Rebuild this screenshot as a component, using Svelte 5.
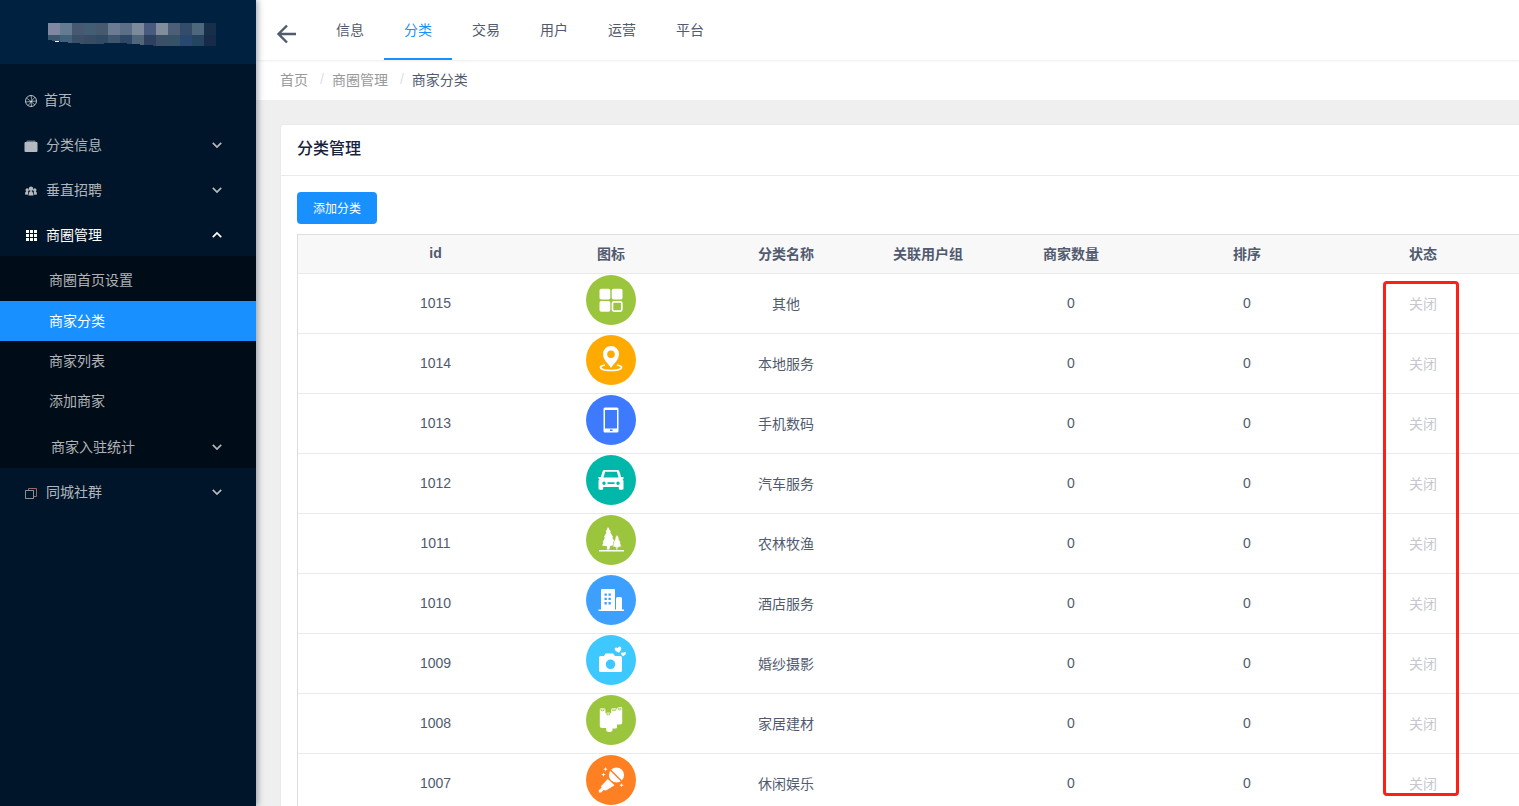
<script>
	let activeTab = $state('分类');
	let shopOpen = $state(true);

	const tabs = ['信息', '分类', '交易', '用户', '运营', '平台'];
	const shopMenu = ['商圈首页设置', '商家分类', '商家列表', '添加商家'];

	const categories = [
		{ id: 1015, icon: 'grid', color: '#9bc53d', name: '其他' },
		{ id: 1014, icon: 'pin', color: '#ffaa00', name: '本地服务' },
		{ id: 1013, icon: 'phone', color: '#3d7aff', name: '手机数码' },
		{ id: 1012, icon: 'car', color: '#00b8a9', name: '汽车服务' },
		{ id: 1011, icon: 'tree', color: '#9bc53d', name: '农林牧渔' },
		{ id: 1010, icon: 'hotel', color: '#3da0ff', name: '酒店服务' },
		{ id: 1009, icon: 'camera', color: '#3dc8ff', name: '婚纱摄影' },
		{ id: 1008, icon: 'home', color: '#9bc53d', name: '家居建材' },
		{ id: 1007, icon: 'mic', color: '#ff8022', name: '休闲娱乐' }
	];

	const mosaicTop = ['#8087a0', '#647c91', '#475970', '#435d74', '#45596f', '#6b7b93', '#5b7086', '#7c8b9b', '#485b7e', '#808d9c', '#4d5e77', '#334c69', '#4f677b', '#163049'];
	const mosaicBottom = ['#3b586f', '#42617a', '#3b4f68', '#394c66', '#314b66', '#40566f', '#2d4967', '#51667a', '#2e405f', '#3b5067', '#355268', '#284870', '#25445f', '#172b49'];
</script>

{#snippet chevron(up)}
	<svg class="chevron" class:up viewBox="0 0 12 12" aria-hidden="true">
		<path d="M1.8 3.8 6 8l4.2-4.2" fill="none" stroke="currentColor" stroke-width="1.7" />
	</svg>
{/snippet}

{#snippet glyph(kind)}
	{#if kind === 'grid'}
		<rect x="13.500" y="13.700" width="10.800" height="10.800" rx="1.800" />
		<rect x="25.700" y="13.700" width="10.800" height="10.800" rx="1.800" />
		<rect x="13.500" y="26" width="10.800" height="10.800" rx="1.800" />
		<rect class="line" x="26.500" y="26.800" width="9.300" height="9.300" rx="1.500" stroke-width="1.700" />
	{:else if kind === 'pin'}
		<path fill-rule="evenodd" d="M25 11a8 8 0 0 0-8 8c0 6 5 9 8 14 3-5 8-8 8-14a8 8 0 0 0-8-8zm0 4.500a3.800 3.800 0 1 1 0 7.600 3.800 3.800 0 0 1 0-7.600z" />
		<path class="line" d="M19 30c-8 1.500-5 5.500 6 5.500s14-4 6-5.500" stroke-width="1.7" />
	{:else if kind === 'phone'}
		<path fill-rule="evenodd" d="M19 12.500h12a1.500 1.500 0 0 1 1.500 1.500v22a1.500 1.500 0 0 1-1.500 1.500H19a1.500 1.500 0 0 1-1.500-1.500V14a1.500 1.500 0 0 1 1.500-1.500zm0 2.500v18.500h12V15zm5 19.500v1.600h2.500v-1.600z" />
	{:else if kind === 'car'}
		<path fill-rule="evenodd" d="M18.500 15h13c1 0 1.600.6 2 1.600l1.600 5.400h2.400v2h-1.200c.7.500 1.200 1.400 1.200 2.400v7.100c0 .8-.5 1.200-1.200 1.200h-2.200c-.8 0-1.300-.5-1.300-1.300V32H17.200v1.400c0 .8-.5 1.300-1.300 1.300h-2.200c-.7 0-1.200-.4-1.200-1.200v-7.100c0-1 .5-1.900 1.200-2.400h-1.200v-2h2.400l1.600-5.400c.4-1 1-1.600 2-1.600zm.7 1.800-1.800 5.700h15.200l-1.800-5.700zM18 26.500a1.700 1.700 0 1 0 0 3.400 1.700 1.700 0 0 0 0-3.400zm14 0a1.700 1.700 0 1 0 0 3.400 1.700 1.700 0 0 0 0-3.400zM21.500 27.300v1.800h7v-1.800z" />
	{:else if kind === 'tree'}
		<path d="m22 12 3 5-.8.2 3 5-1 .2 2.500 4.300-1 .3 1.500 3-5 1-.8 3.500h-2.600l.2-3.200-5-.8 1.600-3-1-.3 2.400-4.800-1-.2 2.500-5-.9-.2z" />
		<path stroke="#9bc53d" stroke-width=".6" d="m31 19.500 2.300 4-.7.200 2.200 3.800-.7.300 1.500 3.700-3.800 1-.3 2.500h-1.400v-2.500l-3.400-1 1.300-3.500-.8-.3 2.200-4-.6-.2z" />
		<path d="M13 35h25v1.500H13z" />
	{:else if kind === 'hotel'}
		<path fill-rule="evenodd" d="M16 14h12a1 1 0 0 1 1 1v19.500h1V23.500a1.500 1.500 0 0 1 1.500-1.500h3a1.500 1.500 0 0 1 1.500 1.500v11h2V36H12.500v-1.500H15V15a1 1 0 0 1 1-1zm2.500 4.500v2.300h2.300v-2.300zm4 0v2.300h2.300v-2.300zm-4 4.300v2.300h2.300v-2.300zm4 0v2.300h2.300v-2.300zm-4 4.300v2.300h2.300v-2.300zm4 0v2.300h2.300v-2.300z" />
	{:else if kind === 'camera'}
		<path fill-rule="evenodd" d="M14.500 21H18l1.500-2.500h7.500L29 21h5.500a1.500 1.500 0 0 1 1.500 1.500v13a1.500 1.500 0 0 1-1.500 1.500h-20a1.500 1.500 0 0 1-1.500-1.500v-13a1.500 1.500 0 0 1 1.500-1.500zm10 3.500a4.800 4.800 0 1 0 0 9.600 4.800 4.800 0 0 0 0-9.600z" />
		<path d="M33 17.800c-3-1.400-4.800-2.800-4.300-4.400.5-1.400 2.400-1.300 3.100 0 .3-1.700 2.200-2.600 3.200-1.200 1 1.500-.3 3.500-2 5.600zM37.300 21.300c-1.700-1.300-2.700-2.500-2.200-3.600.5-.9 1.700-.6 2 .3.600-1 2-1.400 2.700-.4.600 1.300-.8 2.500-2.500 3.700z" />
	{:else if kind === 'home'}
		<path d="M13.800 14.500c0-2 5.600-2 5.600 0v4c1-1.300 4.800-1.300 5.800 0v-4c0-2 5.600-2 5.600 0 0-3 5.400-3 5.400-1v14.300c0 1-.8 1.700-2 1.700H31v2.500c0 1-.8 1.500-2 1.500h-2.500V35c0 2.800-6.300 2.800-6.300 0v-2h-4c-1.600 0-2.400-.8-2.400-2z" />
		<g fill="none" stroke="#9bc53d" stroke-width=".8">
			<ellipse cx="16.600" cy="14.800" rx="1.900" ry=".9" />
			<ellipse cx="22.300" cy="19" rx="1.900" ry=".9" />
			<ellipse cx="28" cy="14.800" rx="1.900" ry=".9" />
			<ellipse cx="33.600" cy="14" rx="1.700" ry=".9" />
		</g>
	{:else if kind === 'mic'}
		<circle cx="30.500" cy="20" r="7.600" />
		<path d="m24 14.500 12.500 12.500" stroke="#ff8022" stroke-width="1.500" />
		<path d="m21.800 24 6.700 6.300-8.500 5.200-2.500-.5-2.300 2.500h-2.400v-2.300l2.700-2.500-.3-1.700z" />
		<path d="m19.500 12 .6 1.600 1.600.6-1.600.6-.6 1.600-.6-1.600-1.600-.6 1.600-.6zM17.500 17.500l.6 1.600 1.600.6-1.600.6-.6 1.600-.6-1.600-1.600-.6 1.600-.6zM35.500 28l.6 1.600 1.600.6-1.600.6-.6 1.600-.6-1.600-1.600-.6 1.600-.6z" />
	{/if}
{/snippet}

<div class="layout">
	<aside class="sidebar">
		<div class="logo">
			<svg width="168" height="23" viewBox="0 0 168 23" shape-rendering="crispEdges" aria-hidden="true">
				{#each mosaicTop as fill, i}
					<rect x={i * 12} y="0" width="12" height="12" {fill} />
				{/each}
				{#each mosaicBottom as fill, i}
					<rect x={i * 12} y="12" width="12" height="11" {fill} />
				{/each}
				<path d="M0 17 24 20 40 21 72 20 112 23H0z" fill="#002140" />
				<path d="M7 18h4v1H7z" fill="#fff" />
			</svg>
		</div>

		<nav class="menu">
			<a class="item home" href="#home">
				<svg class="menu-icon" viewBox="0 0 14 14" fill="none" stroke="currentColor" aria-hidden="true">
					<circle cx="7" cy="7" r="5.5" />
					<path d="M7 1.500 8 7 4 11.500M12.500 7 7 7.500 2.500 4M10.800 11 7 7.500 1.500 8M11 3.200 7 7.500 7.500 12.500" stroke-width=".8" />
				</svg>
				<span>首页</span>
			</a>
			<button class="item">
				<svg class="menu-icon" viewBox="0 0 14 14" fill="currentColor" aria-hidden="true">
					<path d="M3 1.500h8l1 1.500H2z" opacity=".6" />
					<rect x=".5" y="3" width="13" height="10" rx="1" />
				</svg>
				<span>分类信息</span>
				{@render chevron(false)}
			</button>
			<button class="item">
				<svg class="menu-icon" viewBox="0 0 14 14" fill="currentColor" aria-hidden="true">
					<circle cx="7" cy="4.800" r="2.200" />
					<circle cx="3.200" cy="6" r="1.700" />
					<circle cx="10.800" cy="6" r="1.700" />
					<path d="M4.500 11.500c0-6 5-6 5 0zM1 10.500C.8 6.500 3.500 7 4.200 8L4 10.800zM13 10.500c.2-4-2.500-3.500-3.200-2.500l.2 2.800z" />
				</svg>
				<span>垂直招聘</span>
				{@render chevron(false)}
			</button>
			<button class="item open" aria-expanded={shopOpen} onclick={() => (shopOpen = !shopOpen)}>
				<svg class="menu-icon" viewBox="0 0 14 14" fill="currentColor" aria-hidden="true">
					{#each [1, 5, 9] as y}
						{#each [2, 6, 10] as x}
							<rect {x} {y} width="3" height="3" />
						{/each}
					{/each}
				</svg>
				<span>商圈管理</span>
				{@render chevron(shopOpen)}
			</button>
			{#if shopOpen}
				<div class="submenu">
					{#each shopMenu as label}
						<a class="subitem" class:active={label === '商家分类'} href="#shop"><span>{label}</span></a>
					{/each}
					<button class="subitem nested">
						<span>商家入驻统计</span>
						{@render chevron(false)}
					</button>
				</div>
			{/if}
			<button class="item">
				<svg class="menu-icon" viewBox="0 0 14 14" fill="none" stroke="currentColor" aria-hidden="true">
					<path d="M1.500 4.500h8v8h-8z" opacity=".75" />
					<path d="M4.500 4V2.500h8v8H10" stroke="#a5675d" />
				</svg>
				<span>同城社群</span>
				{@render chevron(false)}
			</button>
		</nav>
	</aside>

	<main class="main">
		<header class="topbar">
			<button class="back" aria-label="返回">
				<svg width="20" height="20" viewBox="0 0 20 20" fill="none" stroke="currentColor" stroke-width="2.400" aria-hidden="true">
					<path d="M20 10H2.500M11 1.500 2.500 10 11 18.500" />
				</svg>
			</button>
			<nav class="tabs">
				{#each tabs as tab}
					<button class="tab" class:active={activeTab === tab} onclick={() => (activeTab = tab)}>{tab}</button>
				{/each}
			</nav>
		</header>

		<nav class="breadcrumb">
			<a href="#home">首页</a>
			<span class="separator">/</span>
			<a href="#shop">商圈管理</a>
			<span class="separator">/</span>
			<span class="current">商家分类</span>
		</nav>

		<div class="content">
			<section class="card">
				<h1 class="card-head">分类管理</h1>
				<div class="card-body">
					<button class="primary">添加分类</button>
					<div class="table-wrap">
						<table>
							<colgroup>
								<col class="c-check" />
								<col class="c-id" />
								<col class="c-wide" />
								<col class="c-name" />
								<col class="c-group" />
								<col class="c-wide" />
								<col class="c-wide" />
								<col class="c-wide" />
								<col />
							</colgroup>
							<thead>
								<tr>
									<th></th>
									<th>id</th>
									<th>图标</th>
									<th>分类名称</th>
									<th>关联用户组</th>
									<th>商家数量</th>
									<th>排序</th>
									<th>状态</th>
									<th></th>
								</tr>
							</thead>
							<tbody>
								{#each categories as row}
									<tr>
										<td></td>
										<td>{row.id}</td>
										<td class="icon-cell">
											<svg class="category-icon" viewBox="0 0 50 50" fill="#fff" aria-hidden="true">
												<circle cx="25" cy="25" r="25" fill={row.color} />
												{@render glyph(row.icon)}
											</svg>
										</td>
										<td>{row.name}</td>
										<td></td>
										<td>0</td>
										<td>0</td>
										<td class="status">关闭</td>
										<td></td>
									</tr>
								{/each}
							</tbody>
						</table>
						<div class="highlight"></div>
					</div>
				</div>
			</section>
		</div>
	</main>
</div>

<style>
	:global(body) {
		margin: 0;
		overflow: hidden;
		font-family: 'Liberation Sans', 'Noto Sans CJK SC', sans-serif;
		font-size: 14px;
		color: #515a6e;
	}

	button {
		border: 0;
		padding: 0;
		background: none;
		font: inherit;
		color: inherit;
		cursor: pointer;
	}

	a {
		color: inherit;
		text-decoration: none;
	}

	.layout {
		display: flex;
		height: 100vh;
		overflow: hidden;
	}

	.sidebar {
		position: relative;
		z-index: 1;
		flex: 0 0 256px;
		background: #001529;
		color: rgba(255, 255, 255, 0.7);
		box-shadow: 2px 0 6px rgba(0, 21, 41, 0.35);
	}

	.logo {
		display: flex;
		align-items: center;
		height: 64px;
		padding: 4px 0 0 48px;
		box-sizing: border-box;
		background: #002140;
	}

	.menu {
		display: flex;
		flex-direction: column;
		padding-top: 16px;
	}

	.item {
		display: flex;
		align-items: center;
		gap: 8px;
		height: 40px;
		margin-bottom: 5px;
		padding: 0 33px 0 24px;
	}

	.item span,
	.subitem span {
		padding-bottom: 2px;
	}

	.item.home {
		gap: 6px;
	}

	.item.open {
		margin-bottom: 1px;
		color: #fff;
	}

	.menu-icon {
		width: 14px;
		height: 14px;
		margin-top: 2px;
	}

	.chevron {
		width: 12px;
		height: 12px;
		margin-left: auto;
	}

	.chevron.up {
		transform: rotate(180deg);
	}

	.submenu {
		display: flex;
		flex-direction: column;
		margin-bottom: 4px;
		padding: 4px 0 1px;
		background: #000c17;
	}

	.subitem {
		display: flex;
		align-items: center;
		height: 40px;
		padding: 0 33px 0 49px;
	}

	.subitem.active {
		margin-top: 1px;
		background: #1890ff;
		color: #fff;
	}

	.subitem.nested {
		margin-top: 6px;
		padding-left: 51px;
	}

	.main {
		display: flex;
		flex-direction: column;
		flex: 1;
		min-width: 0;
		background: #efefef;
	}

	.topbar {
		position: relative;
		display: flex;
		flex: 0 0 60px;
		padding-left: 20px;
		background: #fff;
		box-shadow: 0 1px 2px rgba(0, 21, 41, 0.08);
	}

	.back {
		width: 40px;
		padding-top: 7px;
		text-align: left;
	}

	.back svg {
		display: block;
	}

	.tabs {
		display: flex;
	}

	.tab {
		padding: 0 20px;
		border-bottom: 2px solid transparent;
	}

	.tab.active {
		border-color: #1890ff;
		color: #1890ff;
	}

	.breadcrumb {
		display: flex;
		align-items: center;
		flex: 0 0 38px;
		padding: 0 0 2px 24px;
		background: #fff;
		color: #999;
	}

	.separator {
		margin: 0 8px 0 12px;
		color: #dcdee2;
	}

	.current {
		color: #515a6e;
	}

	.content {
		flex: 1;
		min-height: 0;
		padding: 24px 0 0 24px;
		overflow: hidden;
	}

	.card {
		border: 1px solid #e8eaec;
		border-right: 0;
		border-radius: 4px 0 0 4px;
		background: #fff;
	}

	.card-head {
		margin: 0;
		padding: 12px 16px 14px;
		border-bottom: 1px solid #e8eaec;
		font-size: 16px;
		font-weight: 500;
		line-height: 24px;
		color: #17233d;
	}

	.card-body {
		padding: 16px 0 16px 16px;
	}

	.primary {
		display: block;
		width: 80px;
		height: 32px;
		margin-bottom: 10px;
		padding-bottom: 2px;
		border-radius: 4px;
		background: #1890ff;
		color: #fff;
		font-size: 12px;
	}

	.table-wrap {
		position: relative;
		border-top: 1px solid #dcdee2;
		border-left: 1px solid #dcdee2;
		overflow: hidden;
	}

	table {
		width: 100%;
		min-width: 1390px;
		border-collapse: separate;
		border-spacing: 0;
		table-layout: fixed;
	}

	.c-check {
		width: 50px;
	}

	.c-id {
		width: 175px;
	}

	.c-wide {
		width: 176px;
	}

	.c-name {
		width: 174px;
	}

	.c-group {
		width: 110px;
	}

	th,
	td {
		box-sizing: border-box;
		padding: 0 0 2px;
		border-bottom: 1px solid #e8eaec;
		text-align: center;
	}

	th {
		height: 39px;
		background: #f8f8f9;
		font-weight: bold;
	}

	td {
		height: 60px;
	}

	.icon-cell {
		vertical-align: top;
		padding-top: 1px;
	}

	.category-icon {
		display: block;
		width: 50px;
		height: 50px;
		margin: 0 auto;
	}

	.line {
		fill: none;
		stroke: #fff;
	}

	.status {
		color: #c5c8ce;
	}

	/* marks the status column */
	.highlight {
		position: absolute;
		top: 46px;
		left: 1085px;
		width: 70px;
		height: 509px;
		border: 3px solid #ff1f14;
		border-radius: 4px;
		pointer-events: none;
	}
</style>
